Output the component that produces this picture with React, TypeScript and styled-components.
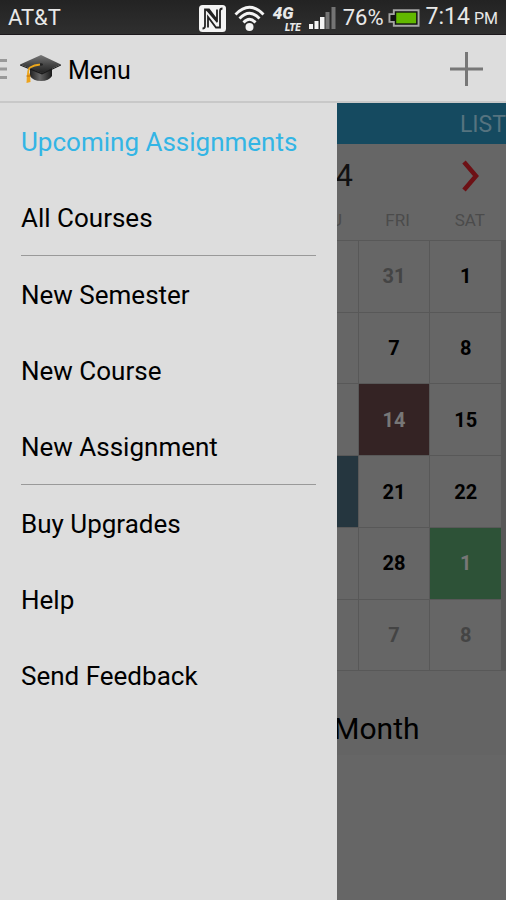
import React from "react";
import styled, { createGlobalStyle } from "styled-components";

const GlobalStyle = createGlobalStyle`
  *, *::before, *::after { box-sizing: border-box; }
  body { margin: 0; background: #666; font-family: Roboto, "Open Sans", sans-serif; color: #000; }
  button { border: 0; padding: 0; background: none; font: inherit; color: inherit; cursor: pointer; }
  svg { display: block; }
`;

const Screen = styled.div`
  display: flex;
  flex-direction: column;
  min-height: 100vh;
  overflow: hidden;
`;

const StatusBar = styled.div`
  display: flex;
  align-items: center;
  height: 35px;
  padding: 2px 8px 0 8px;
  background: linear-gradient(#232323, #2f2f2f);
  border-bottom: 1px solid #1c181c;
  color: #e8e8e8;
  font-size: 23px;
  line-height: 28px;
  white-space: nowrap;
`;

const Carrier = styled.span`
  margin-right: auto;
  font-size: 22px;
`;

const StatusIcons = styled.div`
  display: flex;
  align-items: center;
  gap: 8px;
  margin-right: 7px;
`;

const Battery = styled.span`
  display: flex;
  align-items: center;
  gap: 4px;
  margin-right: 6px;
  font-size: 22px;
`;

const Period = styled.span`
  margin-left: 4px;
  font-size: 16px;
`;

const ActionBar = styled.header`
  display: flex;
  align-items: center;
  height: 68px;
  padding-top: 2px;
  background: #ddd;
  border-bottom: 2px solid #c8c8c8;
`;

const HomeButton = styled.button`
  display: flex;
  align-items: center;
  gap: 12px;
`;

const Title = styled.h1`
  margin: 0 auto 0 6px;
  padding-top: 3px;
  font-size: 25px;
  line-height: 32px;
  font-weight: 400;
`;

const AddButton = styled.button`
  display: grid;
  place-items: center;
  width: 79px;
  height: 64px;
`;

const Content = styled.main`
  position: relative;
  display: flex;
  flex-direction: column;
  flex: 1;
`;

const Drawer = styled.nav`
  position: absolute;
  top: 0;
  bottom: 0;
  left: 0;
  width: calc(100% * 2 / 3);
  padding: 0 21px;
  background: #ddd;
`;

const MenuList = styled.ul`
  list-style: none;
  margin: 0;
  padding: 0;

  & + & { border-top: 1px solid #999; }
`;

const MenuItem = styled.button<{ $active?: boolean }>`
  display: block;
  width: 100%;
  height: 76px;
  padding-top: 2px;
  text-align: left;
  font-size: 26px;
  line-height: 32px;
  white-space: nowrap;
  color: ${(p) => (p.$active ? "#33b5e5" : "#000")};
`;

const TabBar = styled.div`
  display: flex;
  justify-content: flex-end;
  align-items: center;
  height: 41px;
  padding-top: 2px;
  background: #154a60;
`;

const Tab = styled.button`
  color: #56737f;
  font-size: 23px;
  line-height: 28px;
`;

const MonthHeader = styled.div`
  display: flex;
  justify-content: center;
  align-items: center;
  height: 64px;
`;

const MonthName = styled.h2`
  flex: 1;
  margin: 0 0 0 72px;
  text-align: center;
  font-size: 31px;
  line-height: 36px;
  font-weight: 400;
  color: #111;
`;

const NextButton = styled.button`
  display: grid;
  place-items: center;
  width: 70px;
  height: 64px;
`;

const Weekdays = styled.div`
  display: grid;
  grid-template-columns: repeat(7, 1fr);
  height: 32px;
  padding-top: 2px;
  font-size: 17px;
  line-height: 20px;
  color: #4b4b4b;
  text-align: center;
`;

const CalendarFrame = styled.div`
  padding-right: 4px;
  background: #585858;
  border-top: 1px solid #585858;
`;

const Calendar = styled.table`
  display: block;
  width: 100%;
`;

const Weeks = styled.tbody`
  display: grid;
`;

const Week = styled.tr`
  display: grid;
  grid-template-columns: repeat(7, 1fr);
`;

type Tone = "normal" | "muted" | "maroon" | "teal" | "green";

const toneBackground: Record<Tone, string> = {
  normal: "#666",
  muted: "#666",
  maroon: "#342324",
  teal: "#25363f",
  green: "#2d5237",
};

const toneText: Record<Tone, string> = {
  normal: "#000",
  muted: "#444",
  maroon: "#777",
  teal: "#777",
  green: "#777",
};

const DayCell = styled.td<{ $tone: Tone }>`
  display: grid;
  aspect-ratio: 1;
  padding: 0;
  border: solid #585858;
  border-width: 0 1px 1px 0;
  background: ${(p) => toneBackground[p.$tone]};
  color: ${(p) => toneText[p.$tone]};
`;

const DayButton = styled.button`
  font-size: 20px;
  line-height: 24px;
  font-weight: 700;
`;

const Notice = styled.p`
  margin: 0;
  padding: 40px 0 8px;
  text-align: center;
  font-size: 30px;
  line-height: 36px;
  background: #646464;
`;

const NfcIcon = () => (
  <svg width="27" height="27" viewBox="0 0 27 27" aria-label="NFC">
    <rect width="27" height="27" rx="3.500" fill="#f4f4f4" />
    <g fill="none" stroke="#222" strokeWidth="1.800">
      <path d="M3.500 23.500Q6 23.500 6 21V4.500H10L18 15V4.500" />
      <path d="M23.500 3.500Q21 3.500 21 6V22.500H17L9 12V22.500" />
    </g>
    <path d="M6 4.500H10L18 15V18L8.500 7z" fill="#222" />
  </svg>
);

const WifiIcon = () => (
  <svg width="31" height="27" viewBox="0 0 31 27" aria-label="Wi-Fi">
    <g fill="none" stroke="#f4f4f4" strokeWidth="2.800">
      <path d="M1.500 9.500Q15.500-5 29.500 9.500" />
      <path d="M5.500 13.500Q15.500 3 25.500 13.500" />
      <path d="M9.500 17.500Q15.500 11 21.500 17.500" />
    </g>
    <circle cx="15.500" cy="22" r="4" fill="#f4f4f4" />
  </svg>
);

const Network = styled.span`
  display: flex;
  flex-direction: column;
  width: 28px;
  font-style: italic;
  font-weight: 900;
  font-size: 17px;
  line-height: 19px;
`;

const NetworkType = styled.small`
  align-self: flex-end;
  font-size: 10px;
  line-height: 10px;
`;

const SignalIcon = () => (
  <svg width="27" height="22" viewBox="0 0 27 22" aria-label="Signal">
    <path d="M0 17h4v5H0zM5.500 14h4v8h-4zM11 10h4.500v12H11z" fill="#f4f4f4" />
    <path d="M16.500 5h4v17h-4zM22.500 0h4v22h-4z" fill="#747474" />
  </svg>
);

const BatteryIcon = () => (
  <svg width="32" height="18" viewBox="0 0 33 18" aria-label="Battery">
    <path d="M6 1H31.500V17H6V13H1.500V5H6z" fill="#111" stroke="#a5a5a5" strokeWidth="2" />
    <path d="M8.500 3.500H29V14.500H8.500z" fill="#62b800" />
  </svg>
);

const MenuBars = () => (
  <svg width="7" height="20" viewBox="0 0 7 20" aria-hidden="true">
    <path d="M0 1.500h7M0 10h7M0 18.500h7" stroke="#999" strokeWidth="3" />
  </svg>
);

const CapIcon = () => (
  <svg width="43" height="30" viewBox="0 0 43 30" aria-label="Home">
    <defs>
      <linearGradient id="board" x1="0" y1="0" x2="0" y2="1">
        <stop offset="0" stopColor="#777" />
        <stop offset="0.550" stopColor="#444" />
        <stop offset="1" stopColor="#222" />
      </linearGradient>
      <linearGradient id="base" x1="0" y1="0" x2="1" y2="0">
        <stop offset="0" stopColor="#222" />
        <stop offset="0.450" stopColor="#666" />
        <stop offset="1" stopColor="#1a1a1a" />
      </linearGradient>
    </defs>
    <path d="M11 14L33 14V22Q30 27 22 27Q14 27 11 22z" fill="url(#base)" />
    <path d="M1 10.500L22 1L42 10.500L23 19z" fill="url(#board)" />
    <path d="M1 10.500L23 19L42 10.500V11.500L23 20.500L1 11.500z" fill="#1b1b1b" />
    <ellipse cx="21.500" cy="10.500" rx="2.500" ry="1.200" fill="#222" />
    <path d="M21 10.500Q15 11 11 13.500Q9 15 9 21" fill="none" stroke="#eaa61c" strokeWidth="1.800" />
    <path d="M8 19.500h3L11.500 28L7.500 29z" fill="#eda31b" />
    <path d="M7.500 22h4" stroke="#b86f10" />
  </svg>
);

const PlusIcon = () => (
  <svg width="33" height="34" viewBox="0 0 33 34" aria-hidden="true">
    <path d="M0 17h33M16.500 0v34" stroke="#777" strokeWidth="3" />
  </svg>
);

const NextIcon = () => (
  <svg width="18" height="32" viewBox="0 0 18 32" aria-hidden="true">
    <path d="M2 2L14 16L2 30" fill="none" stroke="#6d1115" strokeWidth="4.500" />
  </svg>
);

const menuGroups = [
  ["Upcoming Assignments", "All Courses"],
  ["New Semester", "New Course", "New Assignment"],
  ["Buy Upgrades", "Help", "Send Feedback"],
];

const weekdays = ["", "", "", "", "THU", "FRI", "SAT"];

type Day = { label?: string; tone?: Tone };

const weeks: Day[][] = [
  [{}, { label: "31", tone: "muted" }, { label: "1" }],
  [{}, { label: "7" }, { label: "8" }],
  [{}, { label: "14", tone: "maroon" }, { label: "15" }],
  [{ tone: "teal" }, { label: "21" }, { label: "22" }],
  [{}, { label: "28" }, { label: "1", tone: "green" }],
  [{}, { label: "7", tone: "muted" }, { label: "8", tone: "muted" }],
].map((tail) => [{}, {}, {}, {}, ...tail] as Day[]);

export default function App() {
  return (
    <Screen>
      <GlobalStyle />
      <StatusBar>
        <Carrier>AT&amp;T</Carrier>
        <StatusIcons>
          <NfcIcon />
          <WifiIcon />
          <Network>4G<NetworkType>LTE</NetworkType></Network>
          <SignalIcon />
        </StatusIcons>
        <Battery>76%<BatteryIcon /></Battery>
        <span>7:14<Period>PM</Period></span>
      </StatusBar>
      <ActionBar>
        <HomeButton aria-label="Close menu">
          <MenuBars />
          <CapIcon />
        </HomeButton>
        <Title>Menu</Title>
        <AddButton aria-label="Add"><PlusIcon /></AddButton>
      </ActionBar>
      <Content>
        <TabBar><Tab>LIST</Tab></TabBar>
        <MonthHeader>
          <MonthName>February 2014</MonthName>
          <NextButton aria-label="Next month"><NextIcon /></NextButton>
        </MonthHeader>
        <Weekdays>
          {weekdays.map((day, i) => <span key={i}>{day}</span>)}
        </Weekdays>
        <CalendarFrame>
          <Calendar>
            <Weeks>
              {weeks.map((week, w) => (
                <Week key={w}>
                  {week.map((day, d) => (
                    <DayCell key={d} $tone={day.tone ?? "normal"}>
                      {day.label && <DayButton>{day.label}</DayButton>}
                    </DayCell>
                  ))}
                </Week>
              ))}
            </Weeks>
          </Calendar>
        </CalendarFrame>
        <Notice>Assignments This Month</Notice>
        <Drawer>
          {menuGroups.map((group, g) => (
            <MenuList key={g}>
              {group.map((label, i) => (
                <li key={label}>
                  <MenuItem $active={g === 0 && i === 0}>{label}</MenuItem>
                </li>
              ))}
            </MenuList>
          ))}
        </Drawer>
      </Content>
    </Screen>
  );
}
